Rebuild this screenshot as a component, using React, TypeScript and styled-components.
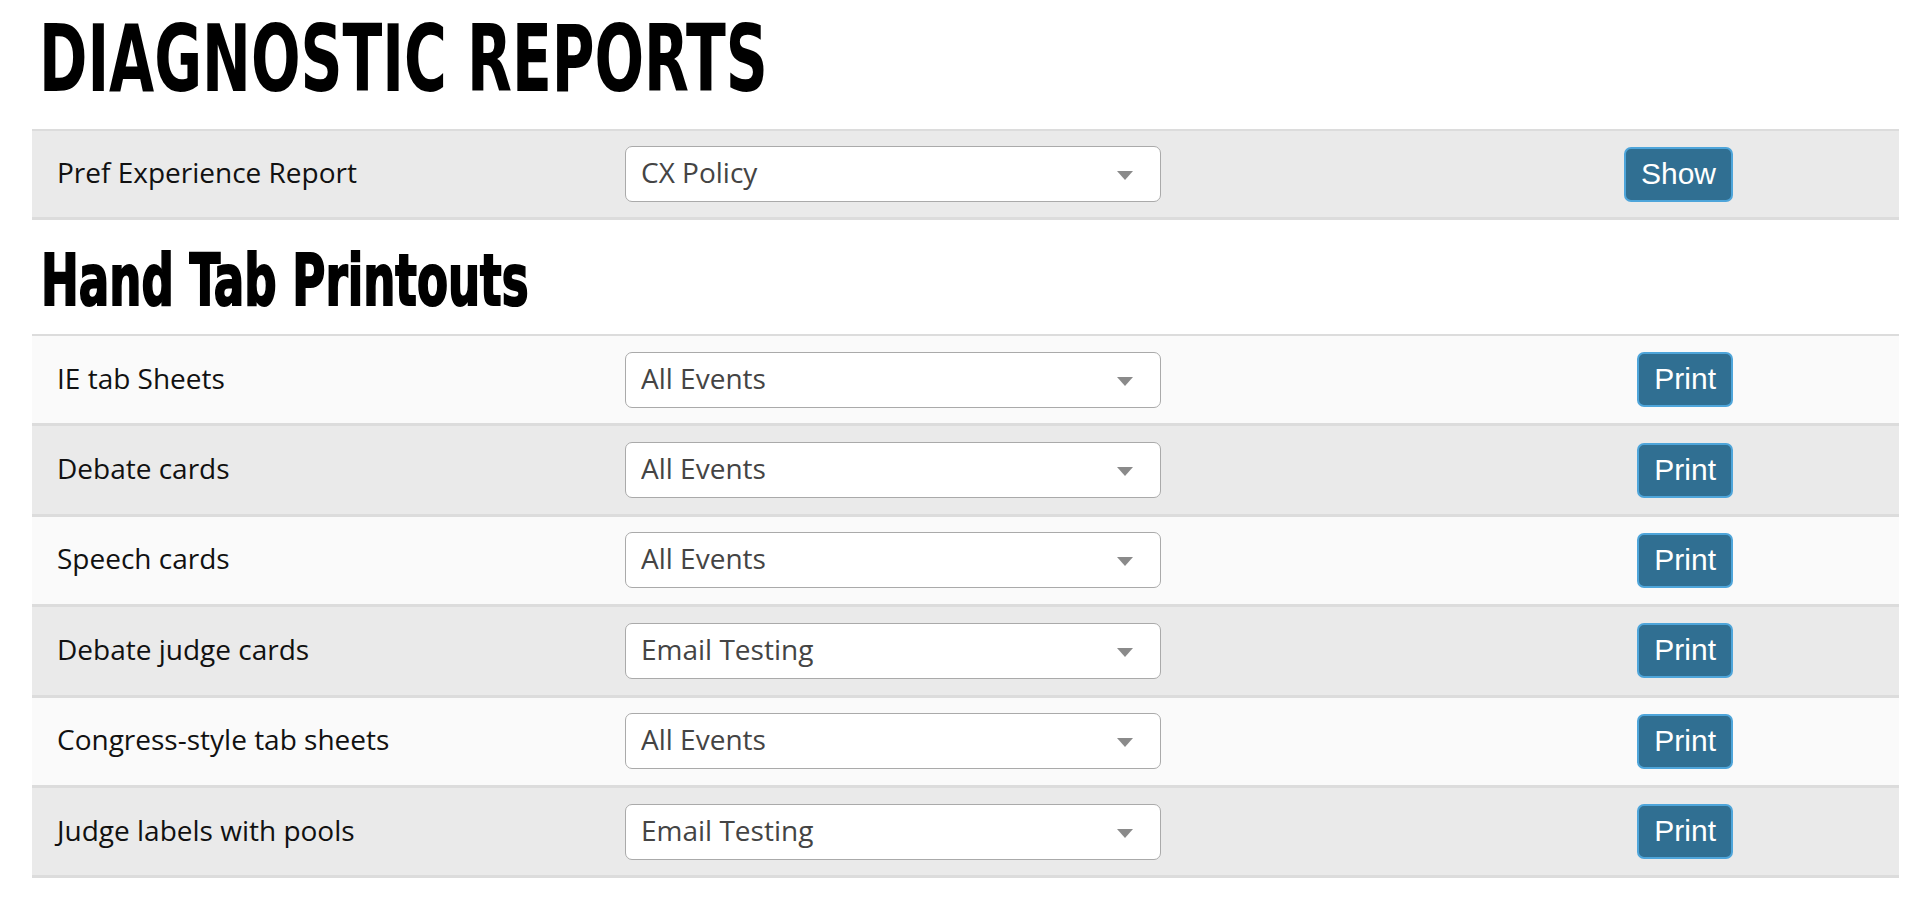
import React from 'react';
import styled, { createGlobalStyle } from 'styled-components';

type Shade = 'light' | 'dark';

interface ReportRow {
  label: string;
  value: string;
  action: string;
  shade: Shade;
}

const diagnostics: ReportRow[] = [
  { label: 'Pref Experience Report', value: 'CX Policy', action: 'Show', shade: 'dark' },
];

const printouts: ReportRow[] = [
  { label: 'IE tab Sheets', value: 'All Events', action: 'Print', shade: 'light' },
  { label: 'Debate cards', value: 'All Events', action: 'Print', shade: 'dark' },
  { label: 'Speech cards', value: 'All Events', action: 'Print', shade: 'light' },
  { label: 'Debate judge cards', value: 'Email Testing', action: 'Print', shade: 'dark' },
  { label: 'Congress-style tab sheets', value: 'All Events', action: 'Print', shade: 'light' },
  { label: 'Judge labels with pools', value: 'Email Testing', action: 'Print', shade: 'dark' },
];

const GlobalStyle = createGlobalStyle`
  html, body {
    margin: 0;
    padding: 0;
    background: #ffffff;
  }

  body {
    font-family: "Open Sans", "Noto Sans", sans-serif;
    color: #111111;
  }
`;

const Page = styled.div`
  padding: 13px 33px 0 32px;
`;

const Heading = styled.h1<{ $size: number }>`
  margin: 0;
  padding-left: 7px;
  font-family: "DejaVu Sans Condensed", "DejaVu Sans", sans-serif;
  font-stretch: condensed;
  font-weight: 700;
  font-size: ${({ $size }) => $size}px;
  line-height: ${({ $size }) => $size}px;
  color: #000000;
  white-space: nowrap;
`;

const SubHeading = styled(Heading)`
  margin: 25px 0 18px;
  padding-left: 9px;
  -webkit-text-stroke: 2px #000000;
`;

const Squeeze = styled.span<{ $scale: number }>`
  display: inline-block;
  transform: scaleX(${({ $scale }) => $scale});
  transform-origin: 0 50%;
`;

const ReportTable = styled.div<{ $gap?: number }>`
  margin-top: ${({ $gap }) => $gap ?? 0}px;
  border-top: 2px solid #dcdcdc;
`;

const Row = styled.div<{ $shade: Shade; $height: number }>`
  display: grid;
  grid-template-columns: 593px 536px 1fr;
  align-items: center;
  height: ${({ $height }) => $height}px;
  background: ${({ $shade }) => ($shade === 'dark' ? '#eaeaea' : '#fafafa')};
  border-bottom: 3px solid #dcdcdc;
`;

const Label = styled.div`
  padding: 0 0 4px 25px;
  font-size: 28px;
  color: #111111;
  white-space: nowrap;
`;

const SelectWrap = styled.div`
  position: relative;
  height: 56px;
`;

const Select = styled.select`
  appearance: none;
  -webkit-appearance: none;
  box-sizing: border-box;
  width: 100%;
  height: 100%;
  margin: 0;
  padding: 0 56px 4px 15px;
  border: 1.5px solid #aaaaaa;
  border-radius: 7px;
  background: #ffffff;
  font-family: "Open Sans", "Noto Sans", sans-serif;
  font-size: 28px;
  color: #444444;
  outline: none;
`;

const Caret = styled.span`
  position: absolute;
  top: 25px;
  right: 28px;
  width: 0;
  height: 0;
  border-left: 8px solid transparent;
  border-right: 8px solid transparent;
  border-top: 9px solid #8a8a8a;
  pointer-events: none;
`;

const ActionCell = styled.div`
  display: flex;
  justify-content: flex-end;
  padding-right: 166px;
`;

const ActionButton = styled.button`
  box-sizing: border-box;
  height: 55px;
  padding: 0 15px 1px;
  border: 2px solid #4ea5da;
  border-radius: 7px;
  background: #306f92;
  color: #ffffff;
  font-family: "Liberation Sans", Arial, sans-serif;
  font-size: 30px;
  cursor: pointer;
`;

const ReportLine: React.FC<{ row: ReportRow; height: number }> = ({ row, height }) => (
  <Row $shade={row.shade} $height={height}>
    <Label>{row.label}</Label>
    <SelectWrap>
      <Select defaultValue={row.value}>
        <option>{row.value}</option>
      </Select>
      <Caret />
    </SelectWrap>
    <ActionCell>
      <ActionButton type="button">{row.action}</ActionButton>
    </ActionCell>
  </Row>
);

const App: React.FC = () => (
  <>
    <GlobalStyle />
    <Page>
      <Heading $size={93}>
        <Squeeze $scale={0.697}>DIAGNOSTIC REPORTS</Squeeze>
      </Heading>

      <ReportTable $gap={23}>
        {diagnostics.map((row) => (
          <ReportLine key={row.label} row={row} height={86} />
        ))}
      </ReportTable>

      <SubHeading as="h4" $size={71}>
        <Squeeze $scale={0.707}>Hand Tab Printouts</Squeeze>
      </SubHeading>

      <ReportTable>
        {printouts.map((row) => (
          <ReportLine key={row.label} row={row} height={87.4} />
        ))}
      </ReportTable>
    </Page>
  </>
);

export default App;
